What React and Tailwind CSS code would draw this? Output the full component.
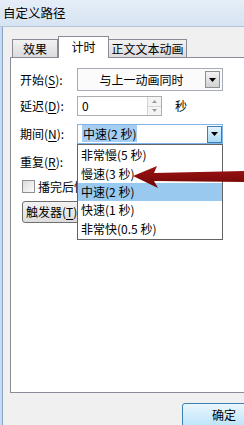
import React from 'react';

const cjk = "font-['Noto_Sans_CJK_SC','Noto_Sans',sans-serif]";

const Arrow = () => (
  <svg width="7" height="4" viewBox="0 0 7 4">
    <path d="M0 0h7L3.5 4z" fill="#000" />
  </svg>
);

const DropBtn = ({ active }) => (
  <div
    className={`flex h-[17px] w-[15px] items-center justify-center border ${
      active
        ? 'border-[#3c7fb1] bg-gradient-to-b from-[#e5f4fc] to-[#a7d9f5]'
        : 'border-[#8e8f8f] bg-gradient-to-b from-[#f4f4f4] to-[#d2d2d2]'
    }`}
  >
    <Arrow />
  </div>
);

const U = ({ children }) => <span className="underline underline-offset-2">{children}</span>;

const Label = ({ children }) => <div className="w-[57px] shrink-0">{children}</div>;

const items = ['非常慢(5 秒)', '慢速(3 秒)', '中速(2 秒)', '快速(1 秒)', '非常快(0.5 秒)'];

export default function App() {
  return (
    <div className={`relative h-[425px] w-[244px] overflow-hidden bg-[#f0f0f0] text-[12px] leading-[14px] text-black ${cjk}`}>
      {/* title bar */}
      <div className="flex h-[26px] items-center bg-gradient-to-b from-[#e6eef8] to-[#d6e3f2] pl-[3px] text-[12.5px]">
        自定义路径
      </div>

      <div className="flex h-[399px] border-t border-[#b4c4d8]">
        {/* window frame */}
        <div className="w-[3px] shrink-0 border-r border-[#8ba3c3] bg-[#c6daf1]" />

        <div className="flex-1 pl-[7px]">
          {/* tabs */}
          <div className="mt-[9px] flex items-end pl-[2px]">
            <div className="flex h-[18px] w-[46px] items-center justify-center border border-b-0 border-[#898c95] bg-gradient-to-b from-[#f2f2f2] to-[#dcdcdc]">
              效果
            </div>
            <div className="relative z-10 -mb-px flex h-[22px] w-[51px] items-start justify-center border border-b-0 border-[#898c95] bg-white pt-[3px]">
              计时
            </div>
            <div className="flex h-[18px] w-[78px] items-center justify-center border border-b-0 border-l-0 border-[#898c95] bg-gradient-to-b from-[#f2f2f2] to-[#dcdcdc]">
              正文文本动画
            </div>
          </div>

          {/* panel */}
          <div className="relative h-[336px] w-[260px] border border-[#898c95] bg-white pl-[9px] pt-[10px]">
            <div className="flex h-[23px] items-center">
              <Label>
                开始(<U>S</U>):
              </Label>
              <div className="flex h-[23px] w-[146px] items-center border border-[#a5acb5] bg-[#fbfbfb] pr-[2px]">
                <div className="flex-1 text-center">与上一动画同时</div>
                <DropBtn />
              </div>
            </div>

            <div className="mt-[5px] flex h-[20px] items-center">
              <Label>
                延迟(<U>D</U>):
              </Label>
              <div className="flex h-[20px] w-[85px] items-center border border-[#abadb3] pl-[4px]">
                <div className="flex-1">0</div>
                <div className="flex h-full w-[14px] flex-col border-l border-[#d5d5d5]">
                  <div className="flex flex-1 items-center justify-center border-b border-[#d5d5d5] bg-[#f4f4f4]">
                    <svg width="5" height="3" viewBox="0 0 5 3"><path d="M0 3h5L2.5 0z" fill="#9a9a9a" /></svg>
                  </div>
                  <div className="flex flex-1 items-center justify-center bg-[#f4f4f4]">
                    <svg width="5" height="3" viewBox="0 0 5 3"><path d="M0 0h5L2.5 3z" fill="#9a9a9a" /></svg>
                  </div>
                </div>
              </div>
              <div className="ml-[13px]">秒</div>
            </div>

            <div className="mt-[8px] flex h-[20px] items-center">
              <Label>
                期间(<U>N</U>):
              </Label>
              <div className="flex h-[20px] w-[146px] items-center border border-[#7eb4ea] bg-white pl-[4px]">
                <div className="flex-1">
                  <span className="bg-[#a6cef2] px-px">中速(2 秒)</span>
                </div>
                <DropBtn active />
              </div>
            </div>

            <div className="mt-[8px] flex h-[20px] items-center">
              <Label>
                重复(<U>R</U>):
              </Label>
              <div className="flex h-[20px] w-[146px] items-center border border-[#abadb3] bg-white pr-[1px]">
                <div className="flex-1" />
                <DropBtn />
              </div>
            </div>

            {/* partly hidden behind the open list */}
            <div className="mt-[8px] flex h-[13px] items-center pl-[2px]">
              <div className="h-[13px] w-[13px] shrink-0 border border-[#8e8f8f] bg-gradient-to-br from-[#dcdcdc] to-[#fbfbfb]" />
              <div className="ml-[3px] w-[40px] overflow-hidden whitespace-nowrap">播完后快退(W)</div>
            </div>

            <div className="ml-[2px] mt-[8px] w-[55px] overflow-hidden">
              <div className="flex h-[22px] w-[76px] items-center justify-start whitespace-nowrap rounded-[3px] border border-[#707070] bg-gradient-to-b from-[#f2f2f2] to-[#dddddd] pl-[3px]">
                触发器(<U>T</U>) ▾
              </div>
            </div>

            {/* open dropdown list */}
            <div className="absolute left-[66px] top-[86px] z-20 w-[146px] border border-[#646464] bg-white py-px">
              {items.map((t, i) => (
                <div
                  key={t}
                  className={`flex h-[18.4px] items-center pl-[3px] ${i === 2 ? 'bg-[#99c9ef]' : ''}`}
                >
                  {t}
                </div>
              ))}
            </div>
          </div>

          {/* bottom buttons */}
          <div className="mt-[10px] flex justify-start pl-[172px]">
            <div className="flex h-[24px] w-[86px] shrink-0 items-center rounded-[3px] border border-[#3c7fb1] bg-gradient-to-b from-[#eaf6fd] to-[#bde4fa] pl-[29px]">
              确定
            </div>
          </div>
        </div>
      </div>

      {/* red annotation arrow */}
      <svg className="absolute left-0 top-0 z-30" width="244" height="425" viewBox="0 0 244 425">
        <defs>
          <linearGradient id="ar" x1="0" y1="0" x2="0" y2="1">
            <stop offset="0" stopColor="#a01414" />
            <stop offset="1" stopColor="#6e0606" />
          </linearGradient>
        </defs>
        <polygon
          points="133,176 157,166 154,173 244,171 244,182 154,181 158,188"
          fill="url(#ar)"
        />
      </svg>
    </div>
  );
}
